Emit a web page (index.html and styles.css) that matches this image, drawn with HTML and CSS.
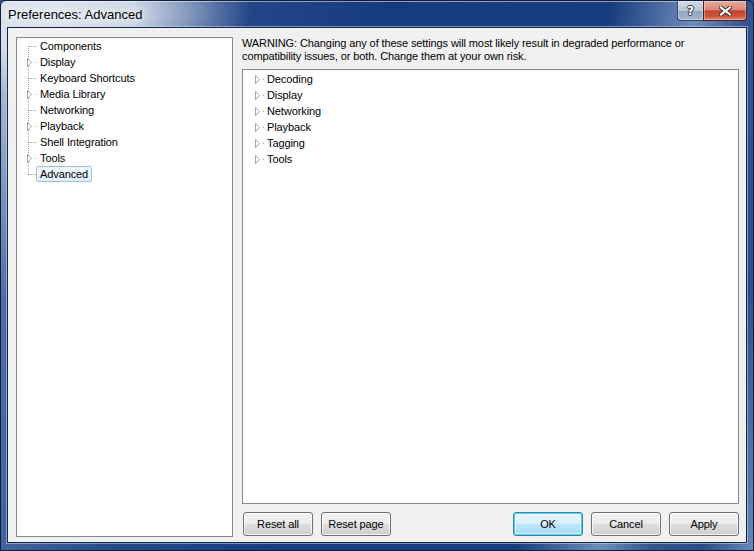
FILE: index.html
```html
<!DOCTYPE html>
<html>
<head>
<meta charset="utf-8">
<title>Preferences: Advanced</title>
<link rel="stylesheet" href="styles.css">
</head>
<body>
<div class="window">
  <div class="titlebar">
    <span class="title">Preferences: Advanced</span>
    <div class="caption-btns">
      <div class="cbtn help"><span>?</span></div>
      <div class="cbtn close">
        <svg width="13" height="10" viewBox="0 0 13 10"><path d="M2 1.5 L11 8.5 M11 1.5 L2 8.5" stroke="#3a2a2a" stroke-width="4" stroke-linecap="square"/><path d="M2 1.5 L11 8.5 M11 1.5 L2 8.5" stroke="#ffffff" stroke-width="2.2" stroke-linecap="square"/></svg>
      </div>
    </div>
  </div>
  <div class="client">
    <div class="tree">
      <div class="row"><svg class="gut" width="19" height="16"><line x1="11.5" y1="8" x2="11.5" y2="16" class="dv"/><line x1="12" y1="8.5" x2="19" y2="8.5" class="dh"/></svg><span class="label">Components</span></div>
      <div class="row"><svg class="gut" width="19" height="16"><line x1="11.5" y1="0" x2="11.5" y2="16" class="dv"/><polygon points="10.5,4.5 14.5,8.5 10.5,12.5" class="tri"/><rect x="18" y="8" width="1" height="1" class="dot"/></svg><span class="label">Display</span></div>
      <div class="row"><svg class="gut" width="19" height="16"><line x1="11.5" y1="0" x2="11.5" y2="16" class="dv"/><line x1="12" y1="8.5" x2="19" y2="8.5" class="dh"/></svg><span class="label">Keyboard Shortcuts</span></div>
      <div class="row"><svg class="gut" width="19" height="16"><line x1="11.5" y1="0" x2="11.5" y2="16" class="dv"/><polygon points="10.5,4.5 14.5,8.5 10.5,12.5" class="tri"/><rect x="18" y="8" width="1" height="1" class="dot"/></svg><span class="label">Media Library</span></div>
      <div class="row"><svg class="gut" width="19" height="16"><line x1="11.5" y1="0" x2="11.5" y2="16" class="dv"/><line x1="12" y1="8.5" x2="19" y2="8.5" class="dh"/></svg><span class="label">Networking</span></div>
      <div class="row"><svg class="gut" width="19" height="16"><line x1="11.5" y1="0" x2="11.5" y2="16" class="dv"/><polygon points="10.5,4.5 14.5,8.5 10.5,12.5" class="tri"/><rect x="18" y="8" width="1" height="1" class="dot"/></svg><span class="label">Playback</span></div>
      <div class="row"><svg class="gut" width="19" height="16"><line x1="11.5" y1="0" x2="11.5" y2="16" class="dv"/><line x1="12" y1="8.5" x2="19" y2="8.5" class="dh"/></svg><span class="label">Shell Integration</span></div>
      <div class="row"><svg class="gut" width="19" height="16"><line x1="11.5" y1="0" x2="11.5" y2="16" class="dv"/><polygon points="10.5,4.5 14.5,8.5 10.5,12.5" class="tri"/><rect x="18" y="8" width="1" height="1" class="dot"/></svg><span class="label">Tools</span></div>
      <div class="row"><svg class="gut" width="19" height="16"><line x1="11.5" y1="0" x2="11.5" y2="9" class="dv"/><line x1="12" y1="8.5" x2="19" y2="8.5" class="dh"/></svg><span class="label selected">Advanced</span></div>
    </div>
    <div class="main">
      <p class="warning">WARNING: Changing any of these settings will most likely result in degraded performance or compatibility issues, or both. Change them at your own risk.</p>
      <div class="list">
        <div class="row"><svg class="gut2" width="21" height="16"><polygon points="12.5,4.5 16.5,8.5 12.5,12.5" class="tri"/><rect x="20" y="8" width="1" height="1" class="dot"/></svg><span class="label">Decoding</span></div>
        <div class="row"><svg class="gut2" width="21" height="16"><polygon points="12.5,4.5 16.5,8.5 12.5,12.5" class="tri"/><rect x="20" y="8" width="1" height="1" class="dot"/></svg><span class="label">Display</span></div>
        <div class="row"><svg class="gut2" width="21" height="16"><polygon points="12.5,4.5 16.5,8.5 12.5,12.5" class="tri"/><rect x="20" y="8" width="1" height="1" class="dot"/></svg><span class="label">Networking</span></div>
        <div class="row"><svg class="gut2" width="21" height="16"><polygon points="12.5,4.5 16.5,8.5 12.5,12.5" class="tri"/><rect x="20" y="8" width="1" height="1" class="dot"/></svg><span class="label">Playback</span></div>
        <div class="row"><svg class="gut2" width="21" height="16"><polygon points="12.5,4.5 16.5,8.5 12.5,12.5" class="tri"/><rect x="20" y="8" width="1" height="1" class="dot"/></svg><span class="label">Tagging</span></div>
        <div class="row"><svg class="gut2" width="21" height="16"><polygon points="12.5,4.5 16.5,8.5 12.5,12.5" class="tri"/><rect x="20" y="8" width="1" height="1" class="dot"/></svg><span class="label">Tools</span></div>
      </div>
      <div class="buttons">
        <button class="btn first">Reset all</button>
        <button class="btn">Reset page</button>
        <span class="spacer"></span>
        <button class="btn default">OK</button>
        <button class="btn">Cancel</button>
        <button class="btn">Apply</button>
      </div>
    </div>
  </div>
</div>
</body>
</html>
```

FILE: styles.css
```css
html, body {
  margin: 0;
  padding: 0;
  background: #2a4d88;
}
.window {
  box-sizing: border-box;
  width: 754px;
  height: 551px;
  border: 1px solid #0e1e3c;
  border-radius: 6px 6px 0 0;
  padding: 0 6px 7px 6px;
  display: flex;
  flex-direction: column;
  background:
    radial-gradient(ellipse 210px 80px at 40px 12px, rgba(226,232,240,1) 0%, rgba(214,222,233,0.95) 45%, rgba(214,222,233,0) 100%),
    radial-gradient(ellipse 20px 260px at 4px 40px, rgba(200,212,228,0.9) 0%, rgba(200,212,228,0) 100%),
    linear-gradient(100deg, #5a79ac 0%, #26498a 25%, #173c7e 45%, #183d7f 72%, #6f8cba 82%, #34558f 88%, #2b4c89 94%, #6a88b8 100%);
  font-family: "Liberation Sans", Arial, sans-serif;
  font-size: 11px;
  letter-spacing: -0.1px;
  color: #000;
}
.titlebar {
  height: 26px;
  display: flex;
  align-items: flex-start;
  box-shadow: inset 0 1px 0 rgba(255,255,255,0.5);
}
.title {
  margin: 6px 0 0 1px;
  font-size: 13px;
  line-height: 15px;
  letter-spacing: 0;
  color: #000;
  text-shadow: 0 0 6px #fff, 0 0 10px rgba(255,255,255,0.9);
  flex: 1;
}
.caption-btns {
  display: flex;
  margin-right: 0;
}
.cbtn {
  box-sizing: border-box;
  height: 20px;
  border: 1px solid #33435e;
  border-top: none;
  display: flex;
  align-items: center;
  justify-content: center;
  box-shadow: inset 0 0 0 1px rgba(255,255,255,0.35);
}
.help {
  width: 26px;
  border-radius: 0 0 0 4px;
  border-right: none;
  background: linear-gradient(to bottom, #d2dbe7 0%, #b7c5d8 50%, #8ea3c0 51%, #a6b8cf 100%);
}
.help span {
  font-family: "DejaVu Sans", sans-serif;
  font-weight: bold;
  font-size: 12px;
  color: #fff;
  text-shadow: 1px 0 0 #2c3340, -1px 0 0 #2c3340, 0 1px 0 #2c3340, 0 -1px 0 #2c3340;
}
.close {
  width: 44px;
  border-radius: 0 0 4px 0;
  border-color: #4a1f1a;
  background: linear-gradient(to bottom, #e7a99b 0%, #d98a78 45%, #c2432b 52%, #c9553c 80%, #dc8a6f 100%);
}
.close svg { display: block; }
.client {
  flex: 1;
  display: flex;
  border: 1px solid #12264a;
  box-shadow: 0 0 0 1px rgba(200,214,235,0.55);
  background: #f0f0f0;
  padding: 9px 7px 4px 8px;
  min-height: 0;
}
.tree {
  box-sizing: border-box;
  width: 217px;
  height: 500px;
  border: 1px solid #828790;
  background: #fff;
}
.row {
  height: 16px;
  display: flex;
  align-items: center;
  white-space: nowrap;
}
.gut, .gut2 {
  display: block;
  flex: none;
  shape-rendering: crispEdges;
}
.dv, .dh {
  stroke: #a0a0a0;
  stroke-width: 1;
  stroke-dasharray: 1 1;
}
.tri {
  fill: #fff;
  stroke: #a6a6a6;
  stroke-width: 1;
  shape-rendering: geometricPrecision;
}
.dot { fill: #a0a0a0; }
.label {
  box-sizing: border-box;
  height: 16px;
  line-height: 14px;
  padding: 0 3px;
  border: 1px solid transparent;
  border-radius: 2px;
}
.list .label { padding: 0 2px; }
.label.selected {
  border-color: #9ec1ea;
  background: linear-gradient(to bottom, #f1f7fe, #e3effc);
}
.main {
  flex: 1;
  margin-left: 9px;
  display: flex;
  flex-direction: column;
  min-width: 0;
}
.warning {
  margin: 0 0 6px 0;
  height: 26px;
  line-height: 13px;
}
.list {
  flex: 1;
  border: 1px solid #828790;
  background: #fff;
  padding-top: 1px;
}
.buttons {
  display: flex;
  gap: 8px;
  margin-top: 8px;
  margin-bottom: 2px;
  height: 24px;
}
.spacer { flex: 1; }
.btn {
  box-sizing: border-box;
  width: 70px;
  height: 24px;
  padding: 0 0 1px 0;
  border: 1px solid #707070;
  border-radius: 3px;
  font-family: "Liberation Sans", Arial, sans-serif;
  font-size: 11px;
  letter-spacing: -0.1px;
  color: #000;
  background: linear-gradient(to bottom, #f2f2f2 0%, #ebebeb 50%, #dddddd 51%, #cfcfcf 100%);
  box-shadow: inset 0 0 0 1px rgba(255,255,255,0.75);
}
.btn.first { margin-left: 1px; }
.btn.default {
  border-color: #3c7fb1;
  background: linear-gradient(to bottom, #eaf6fd 0%, #d9f0fc 50%, #bee6fd 51%, #a7d9f5 100%);
  box-shadow: inset 0 0 0 1px #48d6f3, inset 0 0 0 2px rgba(255,255,255,0.5);
}
```
